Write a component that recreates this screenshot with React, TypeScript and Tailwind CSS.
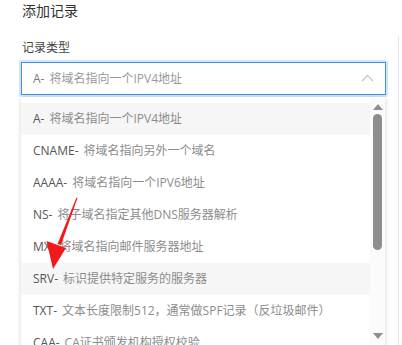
import React from 'react';

const options = [
  { code: 'A-', desc: '将域名指向一个IPV4地址', active: true },
  { code: 'CNAME-', desc: '将域名指向另外一个域名' },
  { code: 'AAAA-', desc: '将域名指向一个IPV6地址' },
  { code: 'NS-', desc: '将子域名指定其他DNS服务器解析' },
  { code: 'MX-', desc: '将域名指向邮件服务器地址' },
  { code: 'SRV-', desc: '标识提供特定服务的服务器', active: true },
  { code: 'TXT-', desc: '文本长度限制512，通常做SPF记录（反垃圾邮件）' },
  { code: 'CAA-', desc: 'CA证书颁发机构授权校验' },
];

export default function App() {
  return (
    <div
      className="relative flex w-[402px] h-[345px] overflow-hidden bg-white"
      style={{ fontFamily: '"Open Sans", "Noto Sans CJK SC", sans-serif' }}
    >
      {/* Form */}
      <div className="w-[398px] pl-[21px] pr-[12px] pt-[1px]">
        <h3 className="text-[14px] leading-[20px] text-[#333] pl-[1px]">添加记录</h3>
        <div className="mt-[18px] pl-[1px] text-[12px] leading-[18px] text-[#444]">记录类型</div>
        <div className="mt-[5px] w-[365px] rounded-[1px] ring-2 ring-[#d3e6f8]">
          <div className="flex items-center justify-between h-[33px] border border-[#3d93e4] pl-[11px] pr-[11px]">
            <span className="text-[12px] text-[#999]">
              <span className="text-[#7a7a7a]">A-</span>
              <span className="ml-[5px]">将域名指向一个IPV4地址</span>
            </span>
            <svg width="13" height="8" viewBox="0 0 13 8" className="mt-[-2px]">
              <path d="M1 7 L6.5 1.5 L12 7" fill="none" stroke="#c4c4c4" strokeWidth="1.2" />
            </svg>
          </div>
        </div>
      </div>

      {/* Right panel edge */}
      <div className="mt-[36px] w-px bg-[#e6e6e6]" />

      {/* Dropdown menu */}
      <div className="absolute left-[21px] top-[97px] w-[364px] h-[260px] flex bg-white shadow-[0_1px_5px_rgba(0,0,0,0.18)]">
        <ul className="flex-1 pt-[6px]">
          {options.map((o) => (
            <li
              key={o.code}
              className={`h-[32px] flex items-center pl-[12px] text-[12px] whitespace-nowrap ${
                o.active ? 'bg-[#f6f6f6]' : ''
              }`}
            >
              <span className="text-[#555]">{o.code}</span>
              <span className="ml-[5px] text-[#8c8c8c]">{o.desc}</span>
            </li>
          ))}
        </ul>
        {/* Scrollbar */}
        <div className="w-[15px] bg-[#fbfbfb] flex flex-col items-center pt-[7px]">
          <svg width="10" height="6" viewBox="0 0 10 6">
            <path d="M0 6 L5 0 L10 6 Z" fill="#8e8e8e" />
          </svg>
          <div className="mt-[4px] w-[9px] h-[136px] rounded-full bg-[#8e8e8e]" />
          <svg width="10" height="6" viewBox="0 0 10 6" className="mt-[83px]">
            <path d="M0 0 L10 0 L5 6 Z" fill="#8e8e8e" />
          </svg>
        </div>
      </div>

      {/* Red annotation arrow */}
      <svg className="absolute left-0 top-0" width="402" height="345" viewBox="0 0 402 345">
        <path d="M76.5 197.5 L77.5 198 L61 245 L57.5 244 Z" fill="#f2191b" />
        <path d="M46.5 241 L66 248 L53 269 Z" fill="#f2191b" />
      </svg>
    </div>
  );
}
